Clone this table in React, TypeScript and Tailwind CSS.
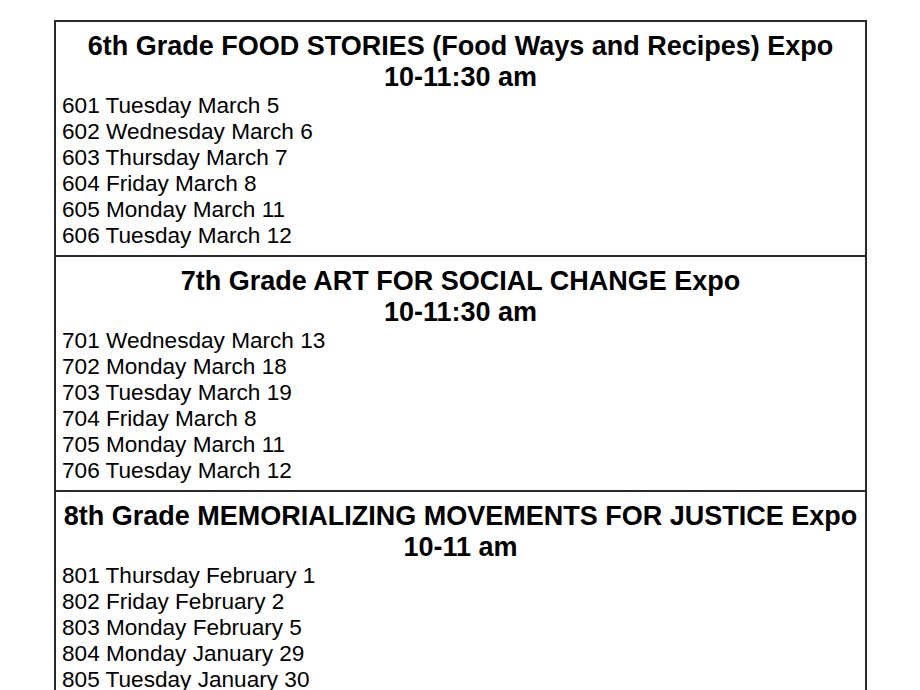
const sections = [
  {
    title: '6th Grade FOOD STORIES (Food Ways and Recipes) Expo',
    time: '10-11:30 am',
    days: [
      '601 Tuesday March 5',
      '602 Wednesday March 6',
      '603 Thursday March 7',
      '604 Friday March 8',
      '605 Monday March 11',
      '606 Tuesday March 12',
    ],
  },
  {
    title: '7th Grade ART FOR SOCIAL CHANGE Expo',
    time: '10-11:30 am',
    days: [
      '701 Wednesday March 13',
      '702 Monday March 18',
      '703 Tuesday March 19',
      '704 Friday March 8',
      '705 Monday March 11',
      '706 Tuesday March 12',
    ],
  },
  {
    title: '8th Grade MEMORIALIZING MOVEMENTS FOR JUSTICE Expo',
    time: '10-11 am',
    days: [
      '801 Thursday February 1',
      '802 Friday February 2',
      '803 Monday February 5',
      '804 Monday January 29',
      '805 Tuesday January 30',
    ],
  },
];

export default function App() {
  return (
    <div className="min-h-screen bg-white pt-[20px] text-black font-['Liberation_Sans',Arial,sans-serif]">
      <div className="ml-[54px] w-[813px] border-2 border-[#2a2a2a]">
        {sections.map((s, i) => (
          <div key={s.title} className={`px-[6px] pt-[9px] pb-[6px] ${i > 0 ? 'border-t-2 border-[#2a2a2a]' : ''}`}>
            <div className="text-center font-bold text-[27px] leading-[31px] whitespace-nowrap">
              <div>{s.title}</div>
              <div>{s.time}</div>
            </div>
            <ul className="text-[22.6px] leading-[26px]">
              {s.days.map((d) => (
                <li key={d}>{d}</li>
              ))}
            </ul>
          </div>
        ))}
      </div>
    </div>
  );
}
